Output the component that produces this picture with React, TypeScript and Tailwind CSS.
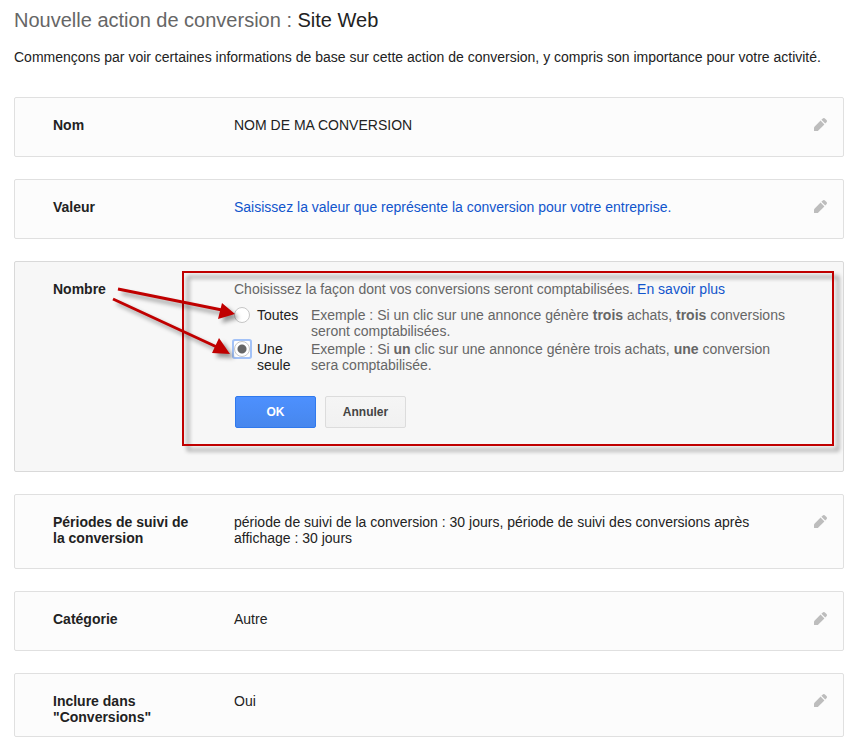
import React, { useState } from "react";

function PencilIcon() {
	return (
		<svg viewBox="0 0 13 13" className="h-[13px] w-[13px]" fill="#bdbdbd">
			<path d="M0 9.2 6.6 2.6 10.4 6.4 3.8 13H.6a.6.6 0 0 1-.6-.6z" />
			<path d="M7.4 1.8 8.8.5a1.5 1.5 0 0 1 2.1 0l1.6 1.6a1.5 1.5 0 0 1 0 2.1L11.2 5.6z" />
		</svg>
	);
}

type RowProps = {
	label: string;
	padding?: string;
	children: React.ReactNode;
};

function Row({ label, padding = "pb-[23px]", children }: RowProps) {
	return (
		<section
			className={`flex rounded-xs border border-[#e0e0e0] bg-[#fcfcfc] pt-[19px] pr-4 pl-[38px] ${padding}`}
		>
			<h2 className="w-[181px] shrink-0 pr-8 font-bold">{label}</h2>
			<div className="min-w-0 flex-1 pr-10">{children}</div>
			<button
				type="button"
				aria-label={`Modifier : ${label}`}
				className="mt-px h-[13px] w-[13px] shrink-0 cursor-pointer"
			>
				<PencilIcon />
			</button>
		</section>
	);
}

type OptionProps = {
	id: string;
	label: string;
	checked: boolean;
	onSelect: (id: string) => void;
	children: React.ReactNode;
};

function Option({ id, label, checked, onSelect, children }: OptionProps) {
	return (
		<div className="grid grid-cols-[23px_54px_1fr]">
			<span
				className={`flex h-4 w-4 rounded-[1px] ${
					checked ? "bg-white ring-2 ring-[#a3c2f7]" : ""
				}`}
			>
				<input
					id={id}
					type="radio"
					name="count"
					checked={checked}
					onChange={() => onSelect(id)}
					className="h-4 w-4 appearance-none rounded-full border border-[#c6c6c6] bg-white checked:bg-[radial-gradient(circle,#666_4px,#fff_5px)]"
				/>
			</span>
			<label htmlFor={id} className="text-[#222]">
				{label}
			</label>
			<p>{children}</p>
		</div>
	);
}

function Annotation() {
	return (
		<>
			<div className="pointer-events-none absolute top-[9px] right-[9px] bottom-[25px] left-[167px] border-2 border-[#c00000] drop-shadow-[5px_5px_2px_rgba(0,0,0,0.45)]" />
			<svg
				className="pointer-events-none absolute top-0 left-0 h-[110px] w-[240px] drop-shadow-[4px_4px_2px_rgba(0,0,0,0.4)]"
				viewBox="0 0 240 110"
				fill="#c00000"
			>
				<path
					d="M103 27 207 48M98 37 204 86"
					stroke="#c00000"
					strokeWidth="3"
				/>
				<path d="M220 52 203 57 207 41zM215 92 197 91 204 76z" />
			</svg>
		</>
	);
}

export default function App() {
	const [count, setCount] = useState("one");

	return (
		<main className="min-h-screen bg-white pt-2 pr-[9px] pb-[6px] pl-[14px] font-['Liberation_Sans',Arial,sans-serif] text-sm leading-4 text-[#222]">
			<h1 className="text-xl leading-6 text-[#666]">
				Nouvelle action de conversion :{" "}
				<span className="text-[#222]">Site Web</span>
			</h1>
			<p className="mt-[17px]">
				Commençons par voir certaines informations de base sur cette
				action de conversion, y compris son importance pour votre
				activité.
			</p>

			<div className="mt-8 flex flex-col gap-[22px]">
				<Row label="Nom">NOM DE MA CONVERSION</Row>
				<Row label="Valeur">
					<a href="#valeur" className="text-[#15c]">
						Saisissez la valeur que représente la conversion pour
						votre entreprise.
					</a>
				</Row>

				<section className="relative flex rounded-xs border border-[#d9d9d9] bg-[#f7f7f7] pt-[19px] pr-4 pb-[43px] pl-[38px]">
					<h2 className="w-[181px] shrink-0 font-bold">Nombre</h2>
					<div className="min-w-0 flex-1 text-[#666]">
						<p>
							Choisissez la façon dont vos conversions seront
							comptabilisées.{" "}
							<a href="#aide" className="text-[#15c]">
								En savoir plus
							</a>
						</p>
						<fieldset className="mt-[10px] flex flex-col gap-[2px]">
							<Option
								id="all"
								label="Toutes"
								checked={count === "all"}
								onSelect={setCount}
							>
								Exemple : Si un clic sur une annonce génère{" "}
								<b>trois</b> achats, <b>trois</b> conversions
								<br />
								seront comptabilisées.
							</Option>
							<Option
								id="one"
								label="Une seule"
								checked={count === "one"}
								onSelect={setCount}
							>
								Exemple : Si <b>un</b> clic sur une annonce
								génère trois achats, <b>une</b> conversion
								<br />
								sera comptabilisée.
							</Option>
						</fieldset>
						<div className="mt-[23px] flex gap-[9px] pl-px">
							<button
								type="button"
								className="h-8 w-[81px] rounded-xs border border-[#3079ed] bg-linear-to-b from-[#4d90fe] to-[#4787ed] text-xs font-bold text-white"
							>
								OK
							</button>
							<button
								type="button"
								className="h-8 w-[81px] rounded-xs border border-[#dcdcdc] bg-linear-to-b from-[#f5f5f5] to-[#f1f1f1] text-xs font-bold text-[#444]"
							>
								Annuler
							</button>
						</div>
					</div>
					<Annotation />
				</section>

				<Row
					label="Périodes de suivi de la conversion"
					padding="pb-[22px]"
				>
					période de suivi de la conversion : 30 jours, période de
					suivi des conversions après affichage : 30 jours
				</Row>
				<Row label="Catégorie">Autre</Row>
				<Row label={'Inclure dans "Conversions"'} padding="pb-[11px]">
					Oui
				</Row>
			</div>
		</main>
	);
}
